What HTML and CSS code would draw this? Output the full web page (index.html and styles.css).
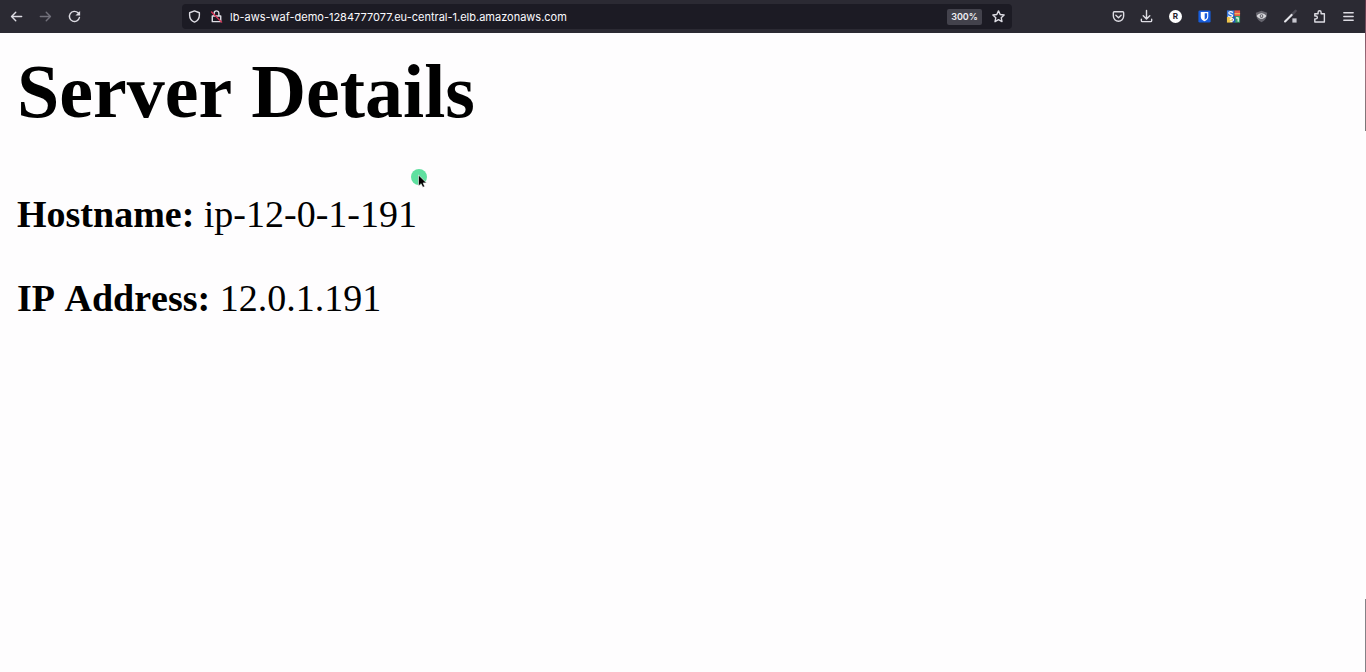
FILE: index.html
```html
<!DOCTYPE html>
<html lang="en">
<head>
<meta charset="utf-8">
<meta name="viewport" content="width=device-width, initial-scale=1">
<title>Server Details</title>
<link rel="stylesheet" href="styles.css">
</head>
<body>
<header class="toolbar">
  <nav class="history" aria-label="History">
    <button class="tool" aria-label="Back"><svg class="icon" viewBox="0 0 16 16"><path d="M13.5 8H3M7.2 3.5 2.7 8l4.5 4.5"/></svg></button>
    <button class="tool tool-off" aria-label="Forward" disabled><svg class="icon" viewBox="0 0 16 16"><path d="M2.5 8H13M8.8 3.5 13.3 8l-4.5 4.5"/></svg></button>
    <button class="tool" aria-label="Reload"><svg class="icon" viewBox="0 0 16 16"><path d="M13.300 9A5.400 5.400 0 1 1 11.800 4.100l1 1"/><path class="solid" d="M14 2v5H9z"/></svg></button>
  </nav>
  <div class="address">
    <button class="tool" aria-label="Tracking protection"><svg class="icon" viewBox="0 0 16 16"><path d="M8 2 13.2 4v2.6c0 3.6-2 6-5.2 7.4-3.200-1.400-5.200-3.800-5.200-7.400V4z"/></svg></button>
    <button class="tool" aria-label="Connection not secure"><svg class="icon" viewBox="0 0 16 16"><path d="M5.500 7.500V4.500a2.500 2.500 0 0 1 5 0v3M3.500 7.500h9V13.500h-9z"/><path class="slash" d="M2.700 3.200 13.500 14"/></svg></button>
    <input class="url" type="text" aria-label="Address" value="lb-aws-waf-demo-1284777077.eu-central-1.elb.amazonaws.com">
    <button class="zoom">300%</button>
    <button class="tool" aria-label="Bookmark"><svg class="icon" viewBox="0 0 16 16"><path d="m8 2 1.800 3.900 4.200.5-3.100 2.900.8 4.200L8 11.400l-3.700 2.100.8-4.200L2 6.400l4.200-.5z"/></svg></button>
  </div>
  <div class="extensions">
    <button class="tool" aria-label="Pocket"><svg class="icon" viewBox="0 0 16 16"><path d="M3.500 3h9a1 1 0 0 1 1 1v3.500a5.500 5.500 0 0 1-11 0V4a1 1 0 0 1 1-1zM5.200 6.700 8 9.300l2.800-2.600"/></svg></button>
    <button class="tool" aria-label="Downloads"><svg class="icon" viewBox="0 0 16 16"><path d="M8 1.500v9M4.500 7.200 8 10.700l3.500-3.500M2.500 11v1.500a1 1 0 0 0 1 1h9a1 1 0 0 0 1-1V11"/></svg></button>
    <button class="tool" aria-label="R extension"><span class="badge">R</span></button>
    <button class="tool" aria-label="Password manager"><svg class="icon art" viewBox="0 0 16 16"><rect x="1.500" y="1.500" width="13" height="13" rx="1.500" fill="#175ddc"/><path fill="#fff" d="M4 3.300h8v4.900c0 2.300-1.800 3.700-4 4.800-2.200-1.100-4-2.500-4-4.800z"/><path fill="#175ddc" d="M8.200 4.600h2.600v3.700c0 1.400-1.100 2.300-2.600 3.200z"/></svg></button>
    <button class="tool" aria-label="Translate"><svg class="icon art" viewBox="0 0 16 16"><path fill="#3978dc" d="M1 1.500h8v7H1z"/><path fill="#e45648" d="M9 1.500h6v6H9z"/><path fill="#efc54b" d="M1 8.500h6v6H1z"/><path fill="#37a46a" d="M9 7.500h6v7H9z"/><path fill="#2458b8" d="M7 8h3v6.500H7z"/><path fill="none" stroke="#fff" stroke-width="1.200" d="M7 3.500C5 2 2.700 3 3 4.500S7 5.500 7 7.200 4 9 2.500 7.500M4.500 11c2-1.500 3.500-.5 3.500.5S6.500 13.500 5 13M11 9.500h2v3.500"/><path fill="none" stroke="#f1d264" stroke-width="1.200" d="M9.500 5h5"/></svg></button>
    <button class="tool" aria-label="Privacy"><svg class="icon art" viewBox="0 0 16 16"><path fill="#65646d" d="M8 1.800 14 4c0 5-2.200 8.400-6 10.200C4.200 12.400 2 9 2 4z"/><path fill="#d8d8dc" d="M2.800 7.500c2.800-4 7.600-4 10.400 0-2.800 4-7.600 4-10.400 0z"/><circle cx="8" cy="7.500" r="2" fill="#65646d"/><circle cx="8" cy="7.500" r=".8" fill="#fff"/></svg></button>
    <button class="tool" aria-label="Color picker"><svg class="icon art" viewBox="0 0 16 16"><path fill="none" stroke="#4c4b55" stroke-width="2.600" d="m9 6.500 4.500-4.500"/><path fill="none" stroke="#e5e5ea" stroke-width="2.200" d="m2.200 13.300 7-7"/><path fill="#c8c8d0" d="M10 10h4.500v4.500H10z"/></svg></button>
    <button class="tool" aria-label="Extensions"><svg class="icon" viewBox="0 0 16 16"><path d="M3 13.800V10.500h1.200a1.500 1.500 0 0 0 0-3H3V5h3.500V3.500a1.600 1.600 0 0 1 3.200 0V5h3.500v8.800z"/></svg></button>
    <button class="tool" aria-label="Menu"><svg class="icon" viewBox="0 0 16 16"><path d="M3 4h10M3 8h10M3 12h10"/></svg></button>
  </div>
</header>
<main class="details">
  <h1 class="title">Server Details</h1>
  <p class="row"><strong>Hostname:</strong> ip-12-0-1-191</p>
  <p class="row"><strong>IP Address:</strong> 12.0.1.191</p>
</main>
<div class="edge edge-top"></div>
<div class="edge edge-bottom"></div>
<svg class="pointer" viewBox="0 0 20 22" aria-hidden="true"><circle cx="9" cy="9" r="8" fill="#5fe0a0"/><path d="M8.500 7v11l2.600-2.300 1.700 3.600 1.900-.9-1.600-3.500h3.400z" fill="#000" stroke="#fff" stroke-width=".6"/></svg>
</body>
</html>
```
FILE: styles.css
```css
* { box-sizing: border-box; }

body {
  margin: 0;
  min-height: 100vh;
  position: relative;
  background: #fefdfe;
  color: #000;
  font-family: "Liberation Serif", "Times New Roman", serif;
  font-kerning: none;
}

.toolbar {
  display: flex;
  align-items: center;
  height: 33px;
  padding: 0 8px 0 6px;
  background: #2b2a33;
  font-family: Inter, "Liberation Sans", sans-serif;
}

.tool {
  display: flex;
  flex: none;
  align-items: center;
  justify-content: center;
  width: 20px;
  height: 24px;
  padding: 0;
  border: 0;
  background: none;
  color: #dddce3;
}

.tool-off { color: #72717b; }

.icon {
  width: 15px;
  height: 15px;
  fill: none;
  stroke: currentColor;
  stroke-width: 1.5;
  stroke-linecap: round;
  stroke-linejoin: round;
}

.art { stroke: none; }
.solid { fill: currentColor; stroke: none; }
.slash { stroke: #d32f51; }

.history {
  display: flex;
  flex: none;
  gap: 9px;
  width: 176px;
}

.address {
  display: flex;
  flex: 1;
  align-items: center;
  min-width: 0;
  height: 25px;
  padding: 0 4px 0 2px;
  border-radius: 4px;
  background: #1c1b24;
}

.address .tool + .tool { margin-left: 2px; }

.url {
  flex: 1;
  min-width: 0;
  padding: 0;
  margin-left: 4px;
  border: 0;
  outline: 0;
  background: none;
  color: #fbfafe;
  font: 400 11px/16px Inter, "Liberation Sans", sans-serif;
}

.zoom {
  width: 35px;
  height: 16px;
  margin-right: 6px;
  padding: 0;
  border: 0;
  border-radius: 2px;
  background: #43424c;
  color: #f0eff5;
  font: 600 9px/16px Inter, "Liberation Sans", sans-serif;
}

.extensions {
  display: flex;
  flex: none;
  justify-content: space-between;
  width: 250px;
  margin-left: 96px;
}

.badge {
  width: 13px;
  height: 13px;
  border-radius: 50%;
  background: #fff;
  color: #222129;
  font: 700 8px/13px Inter, "Liberation Sans", sans-serif;
}

.details { padding: 14px 17px; }

.title {
  margin: 0 0 57px;
  font-size: 76px;
  line-height: 88px;
}

.row {
  margin: 0 0 40px;
  font-size: 38px;
  line-height: 44px;
}

.edge {
  position: absolute;
  right: 0;
  width: 1px;
  background: #858287;
}

.edge-top {
  top: 0;
  height: 131px;
  background: linear-gradient(#5b3548, #a0717e 50%, #777);
}

.edge-bottom {
  bottom: 0;
  height: 73px;
}

.pointer {
  position: absolute;
  top: 168px;
  left: 410px;
  width: 20px;
  height: 22px;
}
```
